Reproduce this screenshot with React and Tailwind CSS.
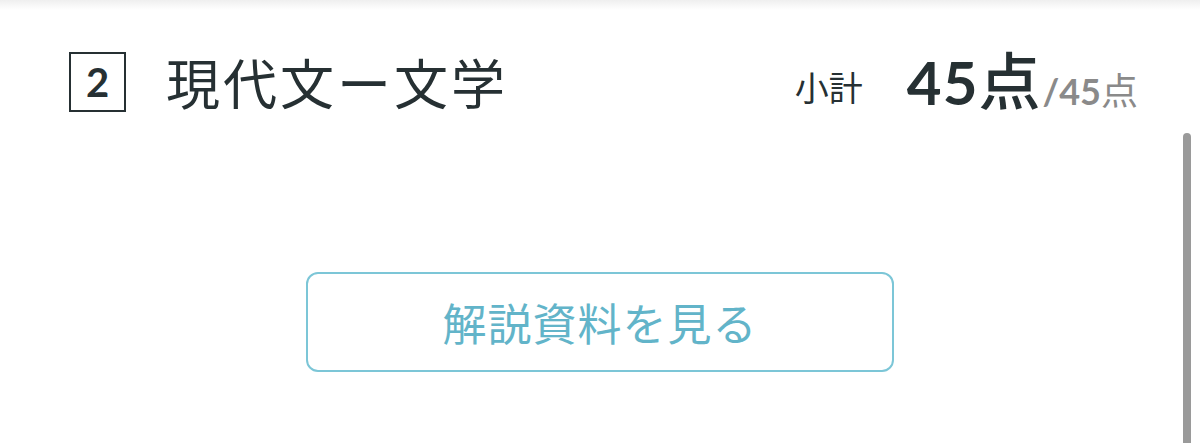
export default function App() {
  const jp = { fontFamily: '"Noto Sans CJK JP", "Noto Sans", sans-serif' };
  return (
    <div className="relative w-[1200px] h-[443px] bg-white overflow-hidden" style={jp}>
      <div className="h-[10px] bg-gradient-to-b from-[#efefef] to-white" />
      <div className="flex items-center justify-between pl-[69px] pr-[62px] pt-[37px]">
        <div className="flex items-center">
          <div className="w-[57px] h-[60px] border-2 border-[#263033] flex items-center justify-center text-[#263033] font-['Lato'] font-bold text-[40px] leading-none">
            2
          </div>
          <div className="ml-[40px] text-[54px] leading-none text-[#263033] tracking-[3px]">現代文ー文学</div>
        </div>
        <div className="flex items-baseline">
          <span className="text-[34px] text-[#263033] mr-[44px] relative top-[-4px]">小計</span>
          <span className="font-['Lato'] font-bold text-[60px] text-[#263033] leading-none tracking-[1px]">45</span>
          <span className="font-medium text-[62px] text-[#263033] leading-none">点</span>
          <span className="font-['Lato'] font-bold text-[36px] text-[#8a8a8a] leading-none ml-[2px]">/45</span>
          <span className="text-[37px] text-[#8a8a8a] leading-none">点</span>
        </div>
      </div>
      <div className="flex justify-center pt-[156px]">
        <div className="w-[588px] h-[100px] border-[2.5px] border-[#7cc6d7] rounded-[12px] flex items-center justify-center text-[44px] text-[#62b4c9] tracking-[1px]">
          解説資料を見る
        </div>
      </div>
      <div className="absolute left-[1183px] top-[133px] w-[8px] h-[320px] rounded-full bg-[#9a9a9a]" />
    </div>
  );
}
